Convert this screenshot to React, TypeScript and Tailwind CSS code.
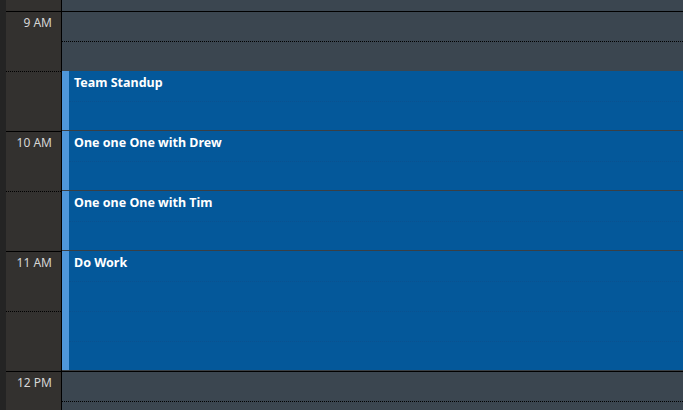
const font = { fontFamily: '"Noto Sans", "Open Sans", sans-serif' }

type Event = { title: string; slots: number }

const events: Event[] = [
  { title: 'Team Standup', slots: 2 },
  { title: 'One one One with Drew', slots: 2 },
  { title: 'One one One with Tim', slots: 2 },
  { title: 'Do Work', slots: 4 },
]

function EventBlock({ event }: { event: Event }) {
  return (
    <div
      className="flex border-b border-[#3a3f44] bg-[#04589a]"
      style={{ height: event.slots * 30 }}
    >
      <div className="w-[7px] shrink-0 bg-[#4f97da]" />
      <div className="relative flex-1">
        {Array.from({ length: event.slots - 1 }).map((_, i) => (
          <div
            key={i}
            className="absolute left-0 right-0 border-t border-dotted border-[#0a5190]"
            style={{ top: (i + 1) * 30 }}
          />
        ))}
        <div className="relative px-[5px] pt-[4px] text-[12.5px] font-bold leading-[16px] text-white">
          {event.title}
        </div>
      </div>
    </div>
  )
}

export default function App() {
  const hours = ['9 AM', '10 AM', '11 AM', '12 PM']
  return (
    <div className="flex h-[410px] w-[683px] overflow-hidden bg-[#3b4650]" style={font}>
      <div className="w-[6px] shrink-0 bg-[#242424]" />
      <div className="w-[56px] shrink-0 border-r border-black bg-[#33312f]">
        <div className="h-[11px]" />
        {hours.map((h) => (
          <div key={h}>
            <div className="h-[60px] border-t border-black pr-[9px] pt-[3px] text-right text-[12px] leading-[16px] text-[#d6d6d6]">
              {h}
            </div>
            <div className="h-[60px] border-t border-dotted border-black" />
          </div>
        ))}
      </div>
      <div className="flex-1">
        <div className="h-[11px]" />
        <div className="h-[30px] border-t border-black" />
        <div className="h-[30px] border-t border-dotted border-black" />
        {events.map((e) => (
          <EventBlock key={e.title} event={e} />
        ))}
        <div className="h-[30px] border-t border-black" />
        <div className="h-[30px] border-t border-dotted border-black" />
      </div>
    </div>
  )
}
